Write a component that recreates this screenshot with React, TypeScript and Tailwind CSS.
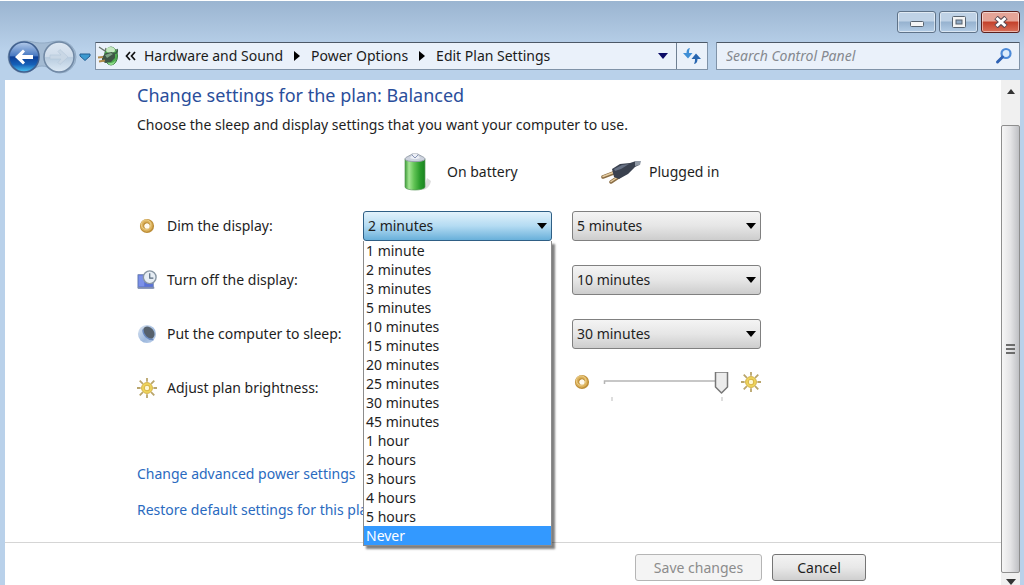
import { useState } from "react";
import clsx from "clsx";

const DURATIONS = [
  "1 minute",
  "2 minutes",
  "3 minutes",
  "5 minutes",
  "10 minutes",
  "15 minutes",
  "20 minutes",
  "25 minutes",
  "30 minutes",
  "45 minutes",
  "1 hour",
  "2 hours",
  "3 hours",
  "4 hours",
  "5 hours",
  "Never",
];

const CRUMBS = ["Hardware and Sound", "Power Options", "Edit Plan Settings"];

function TriangleDown({ className }: { className?: string }) {
  return (
    <svg viewBox="0 0 10 6" className={clsx("h-[6px] w-[10px] shrink-0", className)} fill="currentColor">
      <path d="M0 0h10L5 6z" />
    </svg>
  );
}

function NavButtons() {
  return (
    <div className="relative flex items-center gap-1">
      <svg viewBox="0 0 70 34" className="absolute inset-0 h-[34px] w-[70px]" aria-hidden="true">
        <path
          d="M17 1c8 0 10 2 18 2s10-2 18-2a16 16 0 0 1 0 32c-8 0-10-7-18-7s-10 7-18 7a16 16 0 0 1 0-32z"
          fill="#a4bbd3"
          stroke="#92abc5"
        />
      </svg>
      <button aria-label="Back" className="relative">
        <svg viewBox="0 0 34 34" className="size-[34px]">
          <defs>
            <linearGradient id="back" x1="0" y1="0" x2="0" y2="1">
              <stop offset="0" stopColor="#b4cbea" />
              <stop offset="0.45" stopColor="#4a7ac2" />
              <stop offset="0.5" stopColor="#0d3f96" />
              <stop offset="0.75" stopColor="#1560b8" />
              <stop offset="1" stopColor="#4dc6f3" />
            </linearGradient>
          </defs>
          <circle cx="17" cy="17" r="15" fill="url(#back)" stroke="#3f5f8e" strokeWidth="1.5" />
          <path d="M8 17l8-7.500 2 2-3 3.500h11v4H15l3 3.500-2 2z" fill="#fff" />
        </svg>
      </button>
      <button aria-label="Forward" className="relative -ml-[3px]">
        <svg viewBox="0 0 34 34" className="size-[34px]">
          <defs>
            <linearGradient id="fwd" x1="0" y1="0" x2="0" y2="1">
              <stop offset="0" stopColor="#dde7f2" />
              <stop offset="0.48" stopColor="#cfdcea" />
              <stop offset="0.52" stopColor="#b8ccdf" />
              <stop offset="1" stopColor="#dce9f5" />
            </linearGradient>
          </defs>
          <circle cx="17" cy="17" r="15" fill="url(#fwd)" stroke="#7088a4" strokeWidth="1.5" />
          <path d="M26 17l-8-7.500-2 2 3 3.500H8v4h11l-3 3.500 2 2z" fill="#c9d7e5" stroke="#b4c6d8" strokeWidth="0.6" />
        </svg>
      </button>
    </div>
  );
}

function PowerIcon() {
  return (
    <svg viewBox="0 0 22 22" className="size-[22px] shrink-0">
      <ellipse cx="14" cy="11" rx="6.500" ry="9" fill="#4fae50" stroke="#3d7a42" />
      <ellipse cx="13.500" cy="5" rx="4.500" ry="3" fill="#c4e8c0" />
      <path d="M9 15c2 4 7 4 10 0-1 3-3 5-5 5s-4-2-5-5z" fill="#8fdc8c" />
      <path d="M5 12l4-4 6-1 3 2v4l-4 4-6 1-3-3z" fill="#3f5546" />
      <path d="M8 10l6-2 2 1-6 4z" fill="#7ea485" />
      <path d="M16 8c4 1 5-1 4-4" fill="none" stroke="#3b5f45" strokeWidth="1.600" />
      <path d="M1 12.500l5-.500M2 16.500l6-1" stroke="#b08a4a" strokeWidth="1.800" />
      <path d="M2 2l6 4 1-3" fill="none" stroke="#67736b" strokeWidth="1.200" />
    </svg>
  );
}

function RefreshIcon() {
  return (
    <svg viewBox="0 0 20 20" className="size-5">
      <path d="M8 2C5.500 2.500 4.500 4 4.500 7H1l5 5.500L10.500 7H7c0-2 .2-3.500 1-5z" fill="#3f8fd6" />
      <path d="M12 18c2.500-.5 3.500-2 3.500-5H19l-5-5.500L9.500 13H13c0 2-.2 3.500-1 5z" fill="#2866b0" />
    </svg>
  );
}

function SearchIcon() {
  return (
    <svg viewBox="0 0 18 18" className="size-[18px]">
      <circle cx="11" cy="6.500" r="4.500" fill="#dcecfb" stroke="#4c8ad8" strokeWidth="2.200" />
      <path d="M7.500 10L2.500 15" stroke="#2f62b4" strokeWidth="3" strokeLinecap="round" />
    </svg>
  );
}

function RingIcon() {
  return (
    <svg viewBox="0 0 22 22" className="size-5 shrink-0">
      <circle cx="11" cy="11" r="5.300" fill="#fdf3d8" stroke="#bd8e38" strokeWidth="5" />
      <circle cx="10.500" cy="10.500" r="5.200" fill="none" stroke="#dcb25c" strokeWidth="3" />
      <circle cx="10" cy="9.500" r="5.200" fill="none" stroke="#ecd08c" strokeWidth="1" />
      <circle cx="11" cy="11" r="2.800" fill="#fffaf0" />
    </svg>
  );
}

function SunIcon() {
  return (
    <svg viewBox="0 0 22 22" className="size-5 shrink-0">
      <path
        d="M11 0v4M11 18v4M0 11h4M18 11h4M3 3l3.500 3.500M15.500 15.500L19 19M19 3l-3.500 3.500M6.500 15.500L3 19"
        stroke="#b9a56c"
        strokeWidth="2"
      />
      <circle cx="11" cy="11" r="6" fill="#efd55c" stroke="#cfac40" />
      <circle cx="11" cy="11" r="3" fill="#fdf8d4" stroke="#d9b648" strokeWidth="1.200" />
    </svg>
  );
}

function DisplayClockIcon() {
  return (
    <svg viewBox="0 0 22 22" className="size-5 shrink-0">
      <path d="M1 5h17v15H1z" fill="#5a72d6" stroke="#7d8fb5" />
      <path d="M2 6h6v12H2z" fill="#7b90e8" />
      <path d="M1 18.500h18v2H1z" fill="#7f8db0" />
      <circle cx="14" cy="8" r="7" fill="#e6edf4" stroke="#8795a3" strokeWidth="1.500" />
      <path d="M14 3.500V9h4" fill="none" stroke="#55687c" strokeWidth="1.300" />
    </svg>
  );
}

function MoonIcon() {
  return (
    <svg viewBox="0 0 22 22" className="size-5 shrink-0">
      <defs>
        <linearGradient id="moon" x1="0" y1="0" x2="1" y2="1">
          <stop offset="0" stopColor="#dfe8f3" />
          <stop offset="0.6" stopColor="#9db8dd" />
          <stop offset="1" stopColor="#c5d6ee" />
        </linearGradient>
      </defs>
      <circle cx="11" cy="11" r="10" fill="url(#moon)" />
      <ellipse cx="13" cy="9.500" rx="5.500" ry="7.500" fill="#56616d" transform="rotate(-38 13 9.500)" />
      <path d="M6.500 6c0 6 5 11.500 11.500 11" fill="none" stroke="#6a8abf" strokeWidth="1.500" />
    </svg>
  );
}

function BatteryIcon() {
  return (
    <svg viewBox="0 0 28 40" className="h-10 w-7">
      <defs>
        <linearGradient id="cell" x1="0" y1="0" x2="1" y2="0">
          <stop offset="0" stopColor="#3c9c36" />
          <stop offset="0.2" stopColor="#a5e694" />
          <stop offset="0.45" stopColor="#62c455" />
          <stop offset="0.75" stopColor="#2a9c2c" />
          <stop offset="1" stopColor="#1a8420" />
        </linearGradient>
      </defs>
      <path d="M20 38c4-1 7-4 8-9l-4-3z" fill="#dedede" />
      <path d="M2 7v28c0 4 20 4 20 0V7z" fill="url(#cell)" stroke="#5a985a" strokeWidth="0.700" />
      <path d="M2 7c0-2 5-3 7-5h6c2 2 7 3 7 5 0 3.500-20 3.500-20 0z" fill="#cdd3de" stroke="#98a0ac" />
      <path d="M7 6l3-4h4l3 4c-2 1.500-8 1.500-10 0z" fill="#eceff6" />
      <path d="M9 3l3 3 3-3" fill="none" stroke="#8794b5" />
    </svg>
  );
}

function PlugIcon() {
  return (
    <svg viewBox="0 0 42 24" className="h-6 w-[42px]">
      <path d="M2 17l13-5M10 22l9-6" stroke="#8a6d45" strokeWidth="3.500" strokeLinecap="round" />
      <path d="M2 16.500l13-5M10 21.500l9-6" stroke="#e6cda2" strokeWidth="1.500" strokeLinecap="round" />
      <path d="M11 9l8-5 10-1 6-2h4l-1 4-4 2-7 7-9 5-5-2z" fill="#3a414f" />
      <path d="M13 9l8-4 7-1-8 5-6 2z" fill="#667083" />
      <path d="M34 1h6l-1 4-5 1z" fill="#9099a5" />
    </svg>
  );
}

type DurationSelectProps = {
  label: string;
  initial: string;
  active?: boolean;
};

function DurationSelect({ label, initial, active }: DurationSelectProps) {
  return (
    <div className="relative flex items-center">
      <select
        aria-label={label}
        defaultValue={initial}
        className={clsx(
          "h-[30px] w-full appearance-none rounded-[3px] border pl-1 leading-5 outline-none",
          active
            ? "border-[#2f5f85] bg-linear-to-b from-[#e2f2fb] via-[#b3dbf2] to-[#68b0da]"
            : "border-[#808080] bg-linear-to-b from-[#f4f4f4] via-[#e6e6e6] to-[#cdcdcd]"
        )}
      >
        {DURATIONS.map((duration) => (
          <option key={duration}>{duration}</option>
        ))}
      </select>
      <TriangleDown className="pointer-events-none absolute right-[5px] text-black" />
    </div>
  );
}

function DurationList() {
  return (
    <ul
      role="listbox"
      aria-label="Dim the display duration"
      className="absolute inset-x-0 top-full z-10 border border-[#8c8c8c] border-t-0 bg-white shadow-[3px_3px_2px_#00000080]"
    >
      {DURATIONS.map((duration) => (
        <li
          key={duration}
          role="option"
          aria-selected={duration === "Never"}
          className={clsx(
            "h-[19px] pl-[2px] leading-[19px]",
            duration === "Never" && "bg-[#3399ff] text-white"
          )}
        >
          {duration}
        </li>
      ))}
    </ul>
  );
}

function BrightnessSlider() {
  const [value, setValue] = useState(100);

  return (
    <div className="flex items-start">
      <RingIcon />
      <div className="relative mx-[10px] h-8 flex-1">
        <svg viewBox="0 0 128 32" className="h-8 w-full" aria-hidden="true">
          <path d="M2 12V9h118" fill="none" stroke="#b5b5b5" strokeWidth="1.500" />
          <path d="M9.500 25v4M119.500 25v4" stroke="#bbb" />
          <path
            d="M113 0h12v15l-6 6-6-6z"
            transform={`translate(${((value - 100) * 110) / 100} 0)`}
            fill="#ececec"
            stroke="#777"
            strokeWidth="1.500"
            strokeLinejoin="round"
          />
        </svg>
        <input
          type="range"
          aria-label="Plan brightness, plugged in"
          value={value}
          onChange={(e) => setValue(Number(e.target.value))}
          className="absolute inset-x-0 top-0 h-6 w-full opacity-0"
        />
      </div>
      <SunIcon />
    </div>
  );
}

function TitleBar() {
  const base = "flex h-[22px] w-[39px] items-center justify-center rounded-[3px] border inset-shadow-[0_0_0_1px_#ffffff80]";
  const plain = "border-[#5f7389] bg-linear-to-b from-[#bfd2e6] from-45% via-[#96b2cf] via-50% to-[#b4cde6]";

  return (
    <div className="flex h-[42px] items-start justify-end gap-[3px] border-t border-white pt-[10px] pr-1">
      <button aria-label="Minimize" className={clsx(base, plain)}>
        <svg viewBox="0 0 16 12" className="h-3 w-4">
          <rect x="1.500" y="5.500" width="13" height="5" rx="1" fill="#f5f5f5" stroke="#58636f" />
        </svg>
      </button>
      <button aria-label="Maximize" className={clsx(base, plain)}>
        <svg viewBox="0 0 14 12" className="h-3 w-3.5">
          <rect x="0.500" y="0.500" width="13" height="11" rx="1" fill="#f5f5f5" stroke="#58636f" />
          <rect x="4" y="4" width="6" height="4" fill="#8fa9c4" stroke="#58636f" />
        </svg>
      </button>
      <button
        aria-label="Close"
        className={clsx(base, "border-[#5a1f1c] bg-linear-to-b from-[#e5a497] from-45% via-[#c3402a] via-50% to-[#d9705a]")}
      >
        <svg viewBox="0 0 14 12" className="h-3 w-3.5">
          <path d="M2 1.500l10 9M12 1.500l-10 9" stroke="#5b4a52" strokeWidth="5" />
          <path d="M2.500 2l9 8M11.500 2l-9 8" stroke="#fff" strokeWidth="3" />
        </svg>
      </button>
    </div>
  );
}

function AddressBar() {
  return (
    <div className="flex h-[38px] items-start gap-2 pr-1 pl-[7px]">
      <div className="-mt-[2px] flex items-center gap-[3px]">
        <NavButtons />
        <button aria-label="Recent pages">
          <svg viewBox="0 0 12 8" className="h-2 w-3">
            <path d="M1 1h10v2L6 7.500 1 3z" fill="#3c9ad0" stroke="#235f93" />
          </svg>
        </button>
      </div>
      <div className="-ml-1 flex h-7 flex-1 rounded-[1px] border border-[#8093a8] border-t-[#4c5866] bg-[#eaf1fa]">
        <nav aria-label="Breadcrumb" className="flex flex-1 items-center pl-[1px]">
          <PowerIcon />
          <button aria-label="Show parent folders" className="ml-[6px]">
            <svg viewBox="0 0 11 10" className="h-[10px] w-[11px]" fill="none" stroke="#111" strokeWidth="1.700">
              <path d="M5 1L1.500 5 5 9M10 1L6.500 5 10 9" />
            </svg>
          </button>
          {CRUMBS.map((crumb, i) => (
            <span key={crumb} className="flex items-center">
              {i > 0 && (
                <svg viewBox="0 0 6 10" className="mx-[11px] h-[10px] w-[6px]">
                  <path d="M0 0l6 5-6 5z" />
                </svg>
              )}
              <a href="#" className={clsx("text-[#1b1b1b]", i === 0 && "ml-2")}>
                {crumb}
              </a>
            </span>
          ))}
          <button aria-label="Previous locations" className="mr-2 ml-auto text-[#0b0b66]">
            <TriangleDown />
          </button>
        </nav>
        <button aria-label="Refresh" className="flex w-[31px] items-center justify-center border-l border-[#6f8093]">
          <RefreshIcon />
        </button>
      </div>
      <label className="flex h-7 w-[304px] items-center rounded-[1px] border border-[#8093a8] border-t-[#4c5866] bg-[#eaf1fa] pr-[6px] pl-[9px]">
        <input
          type="search"
          aria-label="Search Control Panel"
          placeholder="Search Control Panel"
          className="min-w-0 flex-1 leading-5 italic outline-none placeholder:text-[#85898f]"
        />
        <SearchIcon />
      </label>
    </div>
  );
}

function ScrollBar() {
  return (
    <div className="flex w-[19px] shrink-0 flex-col bg-[#f0f0f0]">
      <button aria-label="Scroll up" className="flex h-[45px] justify-center pt-[9px]">
        <svg viewBox="0 0 8 5" className="h-[5px] w-2" fill="#333">
          <path d="M0 5h8L4 0z" />
        </svg>
      </button>
      <div className="flex flex-1 flex-col items-center justify-center gap-[2px] rounded-[2px] border border-[#8e8e8e] bg-linear-to-r from-[#f6f6f6] via-[#e4e4e6] to-[#bfc0c4]">
        {[0, 1, 2].map((i) => (
          <span key={i} className="h-[2px] w-[9px] bg-[#6c6c6c]" />
        ))}
      </div>
      <button aria-label="Scroll down" className="flex h-3 items-end justify-center">
        <TriangleDown className="text-[#333]" />
      </button>
    </div>
  );
}

const ROWS = [
  { label: "Dim the display:", Icon: RingIcon, battery: "2 minutes", plugged: "5 minutes" },
  { label: "Turn off the display:", Icon: DisplayClockIcon, battery: "5 minutes", plugged: "10 minutes" },
  { label: "Put the computer to sleep:", Icon: MoonIcon, battery: "15 minutes", plugged: "30 minutes" },
];

function PlanSettings() {
  return (
    <div className="grid auto-rows-[54px] grid-cols-[206px_189px_189px] items-center gap-x-5">
      <div className="col-start-2 flex items-center gap-4 pl-10">
        <BatteryIcon />
        On battery
      </div>
      <div className="flex items-center gap-[6px] pl-[29px]">
        <PlugIcon />
        Plugged in
      </div>
      {ROWS.map(({ label, Icon, battery, plugged }, i) => (
        <div key={label} className="contents">
          <div className="flex items-center gap-[10px]">
            <Icon />
            {label}
          </div>
          <div className="relative">
            <DurationSelect label={`${label} on battery`} initial={battery} active={i === 0} />
            {i === 0 && <DurationList />}
          </div>
          <DurationSelect label={`${label} plugged in`} initial={plugged} />
        </div>
      ))}
      <div className="flex items-center gap-[10px]">
        <SunIcon />
        Adjust plan brightness:
      </div>
      <div className="col-start-3">
        <BrightnessSlider />
      </div>
    </div>
  );
}

export default function App() {
  return (
    <div className="flex h-screen flex-col overflow-hidden bg-[#b9d1ea] bg-linear-to-b from-[#9ab4d0] to-[#b9d1ea] to-[50px] font-['Noto_Sans','Open_Sans',sans-serif] text-sm leading-5 text-[#1e1e1e]">
      <TitleBar />
      <AddressBar />
      <div className="mr-1 ml-[5px] flex min-h-0 flex-1">
        <main className="flex flex-1 flex-col bg-white">
          <div className="flex-1 pl-[132px]">
            <h1 className="pt-[3px] text-lg leading-6 text-[#2a4e9b]">Change settings for the plan: Balanced</h1>
            <p className="mt-2 mb-[10px]">Choose the sleep and display settings that you want your computer to use.</p>
            <PlanSettings />
            <div className="mt-[49px] flex flex-col items-start gap-4 text-[#2a6ac0]">
              <a href="#">Change advanced power settings</a>
              <a href="#">Restore default settings for this plan</a>
            </div>
          </div>
          <footer className="flex h-[43px] items-center justify-end gap-[10px] border-t border-[#d5d5d5] pt-2 pr-[135px] pb-[1px]">
            <button disabled className="h-[27px] w-[127px] rounded-[3px] border border-[#b5b5b5] bg-[#f4f4f4] text-[#8c8c8c]">
              Save changes
            </button>
            <button className="h-[27px] w-[94px] rounded-[3px] border border-[#757575] bg-linear-to-b from-[#f3f3f3] via-[#e8e8e8] to-[#cfcfcf]">
              Cancel
            </button>
          </footer>
        </main>
        <ScrollBar />
      </div>
    </div>
  );
}
